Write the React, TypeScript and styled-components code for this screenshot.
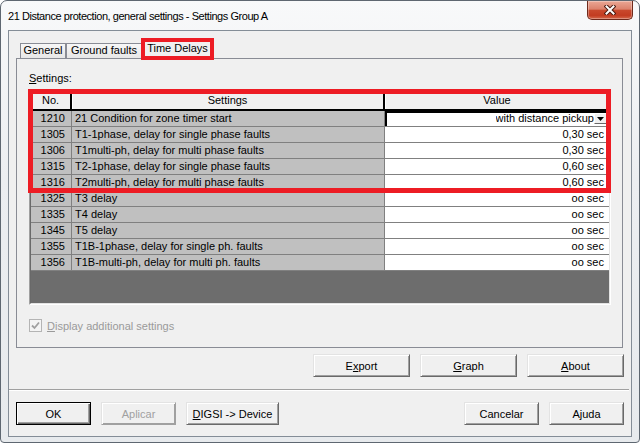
import React from 'react';
import styled, { createGlobalStyle } from 'styled-components';

const GlobalStyle = createGlobalStyle`
  html, body {
    margin: 0;
    padding: 0;
    background: #ffffff;
  }
  body {
    font-family: "Liberation Sans", Arial, sans-serif;
    font-size: 11px;
    color: #000;
  }
  * {
    box-sizing: border-box;
  }
`;

// Window chrome
const Window = styled.div`
  width: 640px;
  height: 443px;
  display: flex;
  flex-direction: column;
  padding: 0 7px 5px 7px;
  border: 1px solid #5e6771;
  border-radius: 7px 7px 4px 4px;
  background: linear-gradient(#f8f9fa, #eceef1 40%, #e7eaed);
`;

const TitleBar = styled.div`
  height: 29px;
  flex-shrink: 0;
  display: flex;
  justify-content: space-between;
  align-items: flex-start;
`;

const Title = styled.div`
  padding-top: 8px;
  font-size: 11px;
  line-height: 14px;
  letter-spacing: -0.45px;
  color: #000;
`;

const CloseButton = styled.div`
  width: 46px;
  height: 19px;
  margin-right: -1px;
  display: flex;
  align-items: center;
  justify-content: center;
  border: 1px solid #6e2a1c;
  border-top: none;
  border-radius: 0 0 5px 5px;
  background: linear-gradient(#eba795 0%, #dc826c 45%, #c9492d 52%, #c33c21 80%, #d4684b 100%);
  box-shadow: inset 0 0 0 1px rgba(255, 255, 255, 0.3);
`;

const Client = styled.div`
  flex: 1;
  display: flex;
  flex-direction: column;
  background: #f0f0f0;
  border: 1px solid #848d97;
  padding: 8px 8px 0 7px;
`;

// Tabs
const TabStrip = styled.div`
  height: 19px;
  flex-shrink: 0;
  display: flex;
  align-items: flex-end;
  padding-left: 4px;
`;

const Tab = styled.div<{ $active?: boolean; $w: number }>`
  position: relative;
  z-index: ${(p) => (p.$active ? 2 : 1)};
  width: ${(p) => p.$w}px;
  height: ${(p) => (p.$active ? 20 : 15)}px;
  margin-bottom: ${(p) => (p.$active ? -1 : 0)}px;
  border: 1px solid #898c95;
  border-bottom: none;
  background: ${(p) => (p.$active ? '#f0f0f0' : 'linear-gradient(#f7f7f7, #e7e7e7)')};
  text-align: center;
  line-height: ${(p) => (p.$active ? 16 : 13)}px;
  white-space: nowrap;
  outline: ${(p) => (p.$active ? '4px solid #ed1c24' : 'none')};
  outline-offset: -3px;
`;

const Panel = styled.div`
  height: 290px;
  flex-shrink: 0;
  display: flex;
  flex-direction: column;
  border: 1px solid #898c95;
  background: #f0f0f0;
  padding: 12px 0 0 12px;
`;

const Label = styled.div`
  line-height: 14px;
`;

// Settings grid
const GridFrame = styled.div`
  position: relative;
  margin-top: 5px;
  width: 582px;
  height: 215px;
  display: flex;
  border: 1px solid;
  border-color: #a0a0a0 #ffffff #ffffff #a0a0a0;
`;

const GridBody = styled.div`
  flex: 1;
  display: flex;
  flex-direction: column;
  border: 1px solid;
  border-color: #696969 #e3e3e3 #e3e3e3 #696969;
  background: #6d6d6d;
`;

const Highlight = styled.div`
  position: absolute;
  top: -2px;
  left: -2px;
  right: -1px;
  height: 104px;
  border: 5px solid #ed1c24;
  pointer-events: none;
  z-index: 2;
`;

const HeaderRow = styled.div`
  display: flex;
  height: 19px;
  border-bottom: 2px solid #000;
  background: #f0f0f0;
`;

const HeadCell = styled.div<{ $w: number; $last?: boolean }>`
  width: ${(p) => p.$w}px;
  text-align: center;
  line-height: 17px;
  border-right: ${(p) => (p.$last ? 'none' : '2px solid #000')};
  box-shadow: inset 1px 1px 0 #ffffff;
`;

const Row = styled.div`
  display: flex;
  height: 16px;
`;

const Cell = styled.div<{ $w: number }>`
  width: ${(p) => p.$w}px;
  line-height: 15px;
  white-space: nowrap;
  overflow: hidden;
  border-right: 1px solid #808080;
  border-bottom: 1px solid #808080;
`;

const NoCell = styled(Cell)`
  background: #c0c0c0;
  text-align: right;
  padding-right: 6px;
`;

const NameCell = styled(Cell)`
  background: #c0c0c0;
  padding-left: 3px;
`;

const ValueCell = styled(Cell)<{ $combo?: boolean }>`
  background: #ffffff;
  border-right: none;
  display: flex;
  align-items: center;
  justify-content: flex-end;
  padding-right: ${(p) => (p.$combo ? 2 : 5)}px;
  box-shadow: ${(p) => (p.$combo ? 'inset 2px 2px 0 #000' : 'none')};
`;

const ComboText = styled.span`
  overflow: hidden;
  white-space: nowrap;
`;

const ComboButton = styled.div`
  width: 13px;
  height: 11px;
  flex-shrink: 0;
  display: flex;
  align-items: center;
  justify-content: center;
  background: #f0f0f0;
  border: 1px solid;
  border-color: #ffffff #696969 #696969 #ffffff;
`;

const EmptyArea = styled.div`
  flex: 1;
`;

// Options + buttons
const CheckRow = styled.div`
  margin-top: 14px;
  height: 13px;
  display: flex;
  align-items: center;
  gap: 5px;
  color: #9a9a9a;
`;

const CheckBox = styled.div`
  width: 13px;
  height: 13px;
  border: 1px solid #b4b4b4;
  background: #f4f4f4;
  display: flex;
  align-items: center;
  justify-content: center;
`;

const ButtonRow = styled.div`
  margin-top: 6px;
  margin-right: -1px;
  display: flex;
  justify-content: flex-end;
  gap: 10px;
`;

const BottomRow = styled.div`
  margin-top: 11px;
  margin-right: -1px;
  display: flex;
  gap: 10px;
`;

const Spacer = styled.div`
  flex: 1;
`;

const Separator = styled.div`
  margin: 12px -6px 0 -7px;
  height: 2px;
  border-top: 1px solid #a0a0a0;
  border-bottom: 1px solid #ffffff;
`;

const Button = styled.div<{ $w: number; $default?: boolean; $disabled?: boolean }>`
  width: ${(p) => p.$w}px;
  height: 23px;
  display: flex;
  align-items: center;
  justify-content: center;
  background: #f0f0f0;
  color: ${(p) => (p.$disabled ? '#a0a0a0' : '#000')};
  border: 1px solid;
  border-color: ${(p) =>
    p.$default ? '#000' : p.$disabled ? '#e3e3e3 #a0a0a0 #a0a0a0 #e3e3e3' : '#e3e3e3 #696969 #696969 #e3e3e3'};
  box-shadow: ${(p) =>
    p.$default
      ? 'inset 1px 1px 0 #ffffff, inset -1px -1px 0 #696969, inset -2px -2px 0 #a0a0a0'
      : 'inset 1px 1px 0 #ffffff, inset -1px -1px 0 #a0a0a0'};
`;

const U = styled.span`
  text-decoration: underline;
`;

interface Setting {
  no: string;
  name: string;
  value: string;
  combo?: boolean;
}

const settings: Setting[] = [
  { no: '1210', name: '21 Condition for zone timer start', value: 'with distance pickup', combo: true },
  { no: '1305', name: 'T1-1phase, delay for single phase faults', value: '0,30 sec' },
  { no: '1306', name: 'T1multi-ph, delay for multi phase faults', value: '0,30 sec' },
  { no: '1315', name: 'T2-1phase, delay for single phase faults', value: '0,60 sec' },
  { no: '1316', name: 'T2multi-ph, delay for multi phase faults', value: '0,60 sec' },
  { no: '1325', name: 'T3 delay', value: 'oo sec' },
  { no: '1335', name: 'T4 delay', value: 'oo sec' },
  { no: '1345', name: 'T5 delay', value: 'oo sec' },
  { no: '1355', name: 'T1B-1phase, delay for single ph. faults', value: 'oo sec' },
  { no: '1356', name: 'T1B-multi-ph, delay for multi ph. faults', value: 'oo sec' },
];

const App: React.FC = () => {
  return (
    <>
      <GlobalStyle />
      <Window>
        <TitleBar>
          <Title>21 Distance protection, general settings - Settings Group A</Title>
          <CloseButton>
            <svg width="12" height="10" viewBox="0 0 12 10">
              <path d="M2.5 1.5 L9.5 8.5 M9.5 1.5 L2.5 8.5" stroke="#4a1a10" strokeWidth="4" strokeLinecap="square" />
              <path d="M2.5 1.5 L9.5 8.5 M9.5 1.5 L2.5 8.5" stroke="#ffffff" strokeWidth="2" strokeLinecap="square" />
            </svg>
          </CloseButton>
        </TitleBar>
        <Client>
          <TabStrip>
            <Tab $w={46}>General</Tab>
            <Tab $w={76}>Ground faults</Tab>
            <Tab $w={71} $active>
              Time Delays
            </Tab>
          </TabStrip>
          <Panel>
            <Label>
              <U>S</U>ettings:
            </Label>
            <GridFrame>
              <Highlight />
              <GridBody>
                <HeaderRow>
                  <HeadCell $w={41}>No.</HeadCell>
                  <HeadCell $w={313}>Settings</HeadCell>
                  <HeadCell $w={224} $last>
                    Value
                  </HeadCell>
                </HeaderRow>
                {settings.map((s) => (
                  <Row key={s.no}>
                    <NoCell $w={41}>{s.no}</NoCell>
                    <NameCell $w={313}>{s.name}</NameCell>
                    <ValueCell $w={224} $combo={s.combo}>
                      {s.combo ? (
                        <>
                          <ComboText>{s.value}</ComboText>
                          <ComboButton>
                            <svg width="7" height="4" viewBox="0 0 7 4">
                              <polygon points="0,0 7,0 3.5,4" fill="#000" />
                            </svg>
                          </ComboButton>
                        </>
                      ) : (
                        s.value
                      )}
                    </ValueCell>
                  </Row>
                ))}
                <EmptyArea />
              </GridBody>
            </GridFrame>
            <CheckRow>
              <CheckBox>
                <svg width="9" height="9" viewBox="0 0 9 9">
                  <path d="M1 4.5 L3.5 7 L8 1.5" stroke="#a0a0a0" strokeWidth="1.8" fill="none" />
                </svg>
              </CheckBox>
              <span>
                <U>D</U>isplay additional settings
              </span>
            </CheckRow>
          </Panel>
          <ButtonRow>
            <Button $w={97}>
              E<U>x</U>port
            </Button>
            <Button $w={97}>
              <U>G</U>raph
            </Button>
            <Button $w={97}>
              <U>A</U>bout
            </Button>
          </ButtonRow>
          <Separator />
          <BottomRow>
            <Button $w={75} $default>
              OK
            </Button>
            <Button $w={75} $disabled>
              Aplicar
            </Button>
            <Button $w={93}>
              <U>D</U>IGSI -&gt; Device
            </Button>
            <Spacer />
            <Button $w={75}>Cancelar</Button>
            <Button $w={75}>Ajuda</Button>
          </BottomRow>
        </Client>
      </Window>
    </>
  );
};

export default App;
